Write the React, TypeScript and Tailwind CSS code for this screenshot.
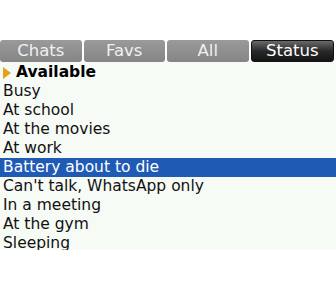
import React from "react";

const items = [
  "Busy",
  "At school",
  "At the movies",
  "At work",
  "Battery about to die",
  "Can't talk, WhatsApp only",
  "In a meeting",
  "At the gym",
  "Sleeping",
];

export default function App() {
  const tabs = ["Chats", "Favs", "All", "Status"];
  return (
    <div className="w-[336px] h-[299px] bg-white overflow-hidden" style={{ fontFamily: '"DejaVu Sans", sans-serif' }}>
      <div className="h-[40px]" />
      <div className="flex gap-[2px] h-[22px] pr-[2px]">
        {tabs.map((t) =>
          t === "Status" ? (
            <div
              key={t}
              className="flex-1 rounded-[3px] flex items-center justify-center text-white text-[16.5px] leading-none bg-gradient-to-b from-[#6a6a6a] via-[#2a2a2a] to-[#141414] border border-[#111]"
            >
              {t}
            </div>
          ) : (
            <div
              key={t}
              className="flex-1 rounded-[3px] flex items-center justify-center text-[#f0f0f0] text-[16.5px] leading-none bg-gradient-to-b from-[#9a9a9a] to-[#858585]"
            >
              {t}
            </div>
          )
        )}
      </div>
      <div className="bg-[#f6fbf5] h-[188px] overflow-hidden">
        <div className="h-[20px] flex items-center pl-[3px] pt-[2px] text-[15.5px] font-bold text-black">
          <svg width="8" height="12" viewBox="0 0 8 12" className="mr-[5px]">
            <polygon points="0,0 8,6 0,12" fill="#e3a21a" />
          </svg>
          Available
        </div>
        {items.map((it) => (
          <div
            key={it}
            className={
              "h-[19px] flex items-center pl-[3px] pt-[1px] text-[15.5px] leading-none " +
              (it === "Battery about to die" ? "bg-[#1f5bb5] text-white" : "text-[#111]")
            }
          >
            {it}
          </div>
        ))}
      </div>
    </div>
  );
}
